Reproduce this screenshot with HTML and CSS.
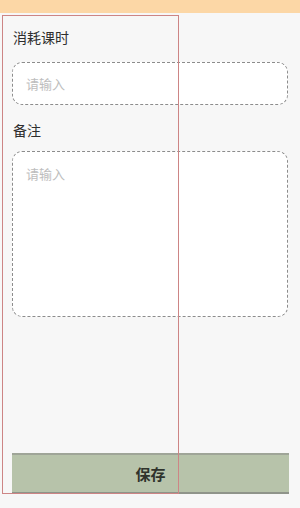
FILE: index.html
```html
<!DOCTYPE html>
<html lang="zh-CN">
<head>
   <meta charset="UTF-8">
   <meta name="viewport" content="width=device-width, initial-scale=1.0">
   <title>消耗课时</title>
   <link rel="stylesheet" href="styles.css">
</head>
<body>
   <div class="page">
       <div class="top-bar"></div>

       <div class="form">
           <div class="form-label">消耗课时</div>
           <div class="field field-input">
               <span class="placeholder">请输入</span>
           </div>

           <div class="form-label label-remark">备注</div>
           <div class="field field-textarea">
               <span class="placeholder">请输入</span>
           </div>
       </div>

       <div class="footer">
           <button class="save-btn">保存</button>
       </div>

       <div class="debug-box"></div>
   </div>
</body>
</html>
```

FILE: styles.css
```css
html, body {
    margin: 0;
    padding: 0;
}

body {
    background: #f7f7f7;
    font-family: "Noto Sans CJK SC", "Noto Sans", sans-serif;
    color: #333;
}

.page {
    position: relative;
    width: 300px;
    height: 508px;
    display: flex;
    flex-direction: column;
    overflow: hidden;
}

.top-bar {
    height: 13px;
    background: #fcd7a6;
}

.form {
    flex: 1;
    padding: 14px 12px 0;
}

.form-label {
    font-size: 14px;
    line-height: 20px;
    color: #2e2e2e;
    padding-left: 1px;
}

.label-remark {
    margin-top: 15px;
}

.field {
    box-sizing: border-box;
    background: #fff;
    border: 1.5px dashed #8c8c8c;
    border-radius: 10px;
    padding: 0 13px;
}

.field-input {
    height: 43px;
    margin-top: 15px;
    display: flex;
    align-items: center;
}

.field-textarea {
    height: 166px;
    margin-top: 11px;
    padding-top: 8px;
}

.placeholder {
    font-size: 13px;
    line-height: 18px;
    color: #bdbdbd;
}

.footer {
    padding: 0 11px 14px 12px;
}

.save-btn {
    display: block;
    width: 100%;
    height: 41px;
    margin: 0;
    padding: 0;
    border: none;
    border-top: 2px solid #9fa598;
    border-bottom: 2px solid #8f948a;
    background: #b7c3aa;
    font-family: inherit;
    font-size: 15px;
    font-weight: bold;
    color: #2f332c;
}

/* outline overlay seen in the screenshot */
.debug-box {
    position: absolute;
    left: 2px;
    top: 15px;
    width: 175px;
    height: 477px;
    border: 1px solid #cd8585;
    pointer-events: none;
}
```
